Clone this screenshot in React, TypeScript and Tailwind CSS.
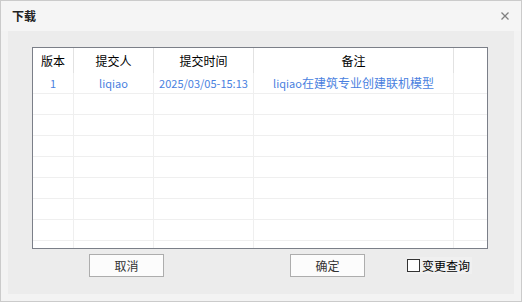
import React from "react";

const font = { fontFamily: '"Microsoft YaHei", "Noto Sans CJK SC", "Noto Sans", sans-serif' };

const cols = ["w-[41px]", "w-[80px]", "w-[100px]", "w-[200px]", "flex-1"];

function Row({ cells, header }: { cells: React.ReactNode[]; header?: boolean }) {
  return (
    <div
      className={
        header
          ? "flex h-[25px] shrink-0 bg-white"
          : "flex h-[21px] shrink-0 border-b border-[#efefef] bg-white"
      }
    >
      {cols.map((c, i) => (
        <div
          key={i}
          className={`${c} flex items-center justify-center ${
            i < 4 ? (header ? "border-r border-[#e2e2e2]" : "border-r border-[#efefef]") : ""
          } ${header ? "text-[12px] text-black" : "text-[11px] text-[#4a7fe0]"} whitespace-nowrap leading-none`}
        >
          {cells[i] ?? ""}
        </div>
      ))}
    </div>
  );
}

export default function App() {
  const empty = ["", "", "", "", ""];
  return (
    <div
      className="w-[522px] h-[302px] border border-[#cbcbcb] bg-[#f3f3f3] flex flex-col overflow-hidden"
      style={font}
    >
      <div className="h-[30px] shrink-0 bg-[#f5f5f5] flex items-center justify-between pl-[11px] pr-[12px]">
        <span className="text-[12px] font-bold text-[#222]">下载</span>
        <svg width="8" height="8" viewBox="0 0 8 8">
          <path d="M0.5 0.5 L7.5 7.5 M7.5 0.5 L0.5 7.5" stroke="#808080" strokeWidth="1.3" />
        </svg>
      </div>
      <div className="mx-[7px] mb-[7px] flex-1 bg-[#ececec] pt-[16px] pl-[24px] pr-[26px] flex flex-col">
        <div className="h-[202px] w-[456px] border border-[#7b7f88] bg-white flex flex-col overflow-hidden">
          <Row header cells={["版本", "提交人", "提交时间", "备注", ""]} />
          <Row
            cells={[
              "1",
              "liqiao",
              "2025/03/05-15:13",
              <span key="r">
                liqiao<span className="text-[12px]">在建筑专业创建联机模型</span>
              </span>,
              "",
            ]}
          />
          {Array.from({ length: 8 }).map((_, i) => (
            <Row key={i} cells={empty} />
          ))}
        </div>
        <div className="flex items-center mt-[5px] h-[23px]">
          <button className="ml-[57px] w-[75px] h-[23px] border border-[#adadad] bg-[#fcfcfc] text-[12px] text-[#333] flex items-center justify-center">
            取消
          </button>
          <button className="ml-[126px] w-[75px] h-[23px] border border-[#adadad] bg-[#fcfcfc] text-[12px] text-[#333] flex items-center justify-center">
            确定
          </button>
          <div className="ml-[42px] flex items-center bg-[#f0f0f0] pr-[2px] h-[17px]">
            <div className="w-[13px] h-[13px] border border-[#333] bg-white" />
            <span className="ml-[2px] text-[12px] text-black leading-none">变更查询</span>
          </div>
        </div>
      </div>
    </div>
  );
}
